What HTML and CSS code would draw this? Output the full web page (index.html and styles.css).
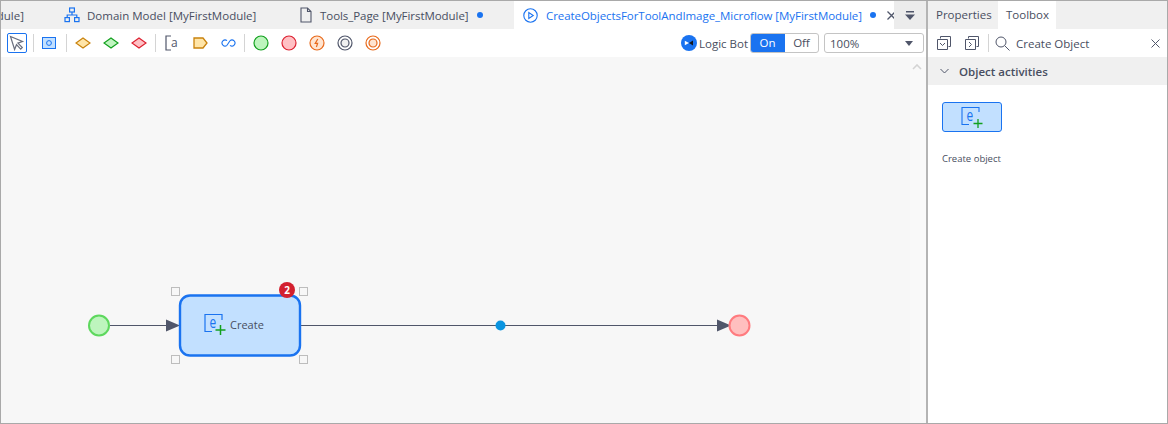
FILE: index.html
```html
<!DOCTYPE html>
<html lang="en">
<head>
    <meta charset="UTF-8">
    <title>Microflow editor</title>
    <link rel="stylesheet" href="styles.css">
</head>
<body>
<div class="app">
    <div class="editor">
        <div class="tabs">
            <div class="tab tab-cut"><span>Home_Web [MyFirstModule]</span></div>
            <div class="tab tab-domain">
                <svg class="tab-icon" width="16" height="16" viewBox="0 0 16 16" fill="none" stroke="#1a73f0" stroke-width="1.2">
                    <rect x="5.6" y="1" width="4.8" height="4"/>
                    <rect x="1" y="10.6" width="4.4" height="4"/>
                    <rect x="10.6" y="10.6" width="4.4" height="4"/>
                    <path d="M8 5v3M3.2 10.6V8h9.6v2.6"/>
                </svg>
                <span>Domain Model [MyFirstModule]</span>
            </div>
            <div class="tab tab-page">
                <svg class="tab-icon" width="12" height="16" viewBox="0 0 12 16" fill="none" stroke="#50566a" stroke-width="1.1">
                    <path d="M1 1h6.500L11 4.500V15H1zM7.500 1v3.500H11"/>
                </svg>
                <span>Tools_Page [MyFirstModule]</span>
                <i class="dot"></i>
            </div>
            <div class="tab tab-active">
                <svg class="tab-icon" width="15" height="15" viewBox="0 0 15 15" fill="none" stroke="#1a73f0" stroke-width="1.1">
                    <circle cx="7.5" cy="7.5" r="6.7"/>
                    <path d="M5.800 4.600v5.800l4.400-2.900z"/>
                </svg>
                <span>CreateObjectsForToolAndImage_Microflow [MyFirstModule]</span>
                <i class="dot"></i>
                <svg class="tab-close" width="9" height="9" viewBox="0 0 9 9" stroke="#50566a" stroke-width="1.3"><path d="M.5.500l8 8M8.500.5l-8 8"/></svg>
            </div>
            <div class="tab-menu">
                <svg width="10" height="9" viewBox="0 0 10 9" fill="#50566a"><rect x="1" y="0" width="8" height="1.5"/><path d="M0 3.500h10L5 9z"/></svg>
            </div>
        </div>

        <div class="toolbar">
            <div class="tool-select">
                <svg width="16" height="16" viewBox="0 0 16 16" fill="#fff" stroke="#6a6f7e" stroke-width="1.2"><path d="M1.500 1.500l12 5-4.600 1.600 4.400 4.400-1.600 1.600-4.200-4.400-1.900 4.800z"/></svg>
            </div>
            <i class="sep sep-first"></i>
            <div class="tool">
                <svg width="14" height="12" viewBox="0 0 14 12"><rect x=".5" y=".5" width="13" height="11" fill="#c2e0ff" stroke="#1a73f0"/><circle cx="7" cy="6" r="2.400" fill="none" stroke="#1a73f0"/></svg>
            </div>
            <i class="sep sep-second"></i>
            <div class="tool"><svg width="16" height="12" viewBox="0 0 16 12"><path d="M8 1l7 5-7 5-7-5z" fill="#ffe5a8" stroke="#c9820c" stroke-width="1.2"/></svg></div>
            <div class="tool"><svg width="16" height="12" viewBox="0 0 16 12"><path d="M8 1l7 5-7 5-7-5z" fill="#c0f5c0" stroke="#12a01e" stroke-width="1.2"/></svg></div>
            <div class="tool"><svg width="16" height="12" viewBox="0 0 16 12"><path d="M8 1l7 5-7 5-7-5z" fill="#ffc0c4" stroke="#dc2030" stroke-width="1.2"/></svg></div>
            <i class="sep"></i>
            <div class="tool">
                <svg width="14" height="16" viewBox="0 0 14 16" fill="none" stroke="#50566a" stroke-width="1.2">
                    <path d="M6 1H1v14h5"/>
                    <text x="6" y="12" class="icon-letter" fill="#50566a" stroke="none">a</text>
                </svg>
            </div>
            <div class="tool"><svg width="15" height="12" viewBox="0 0 15 12"><path d="M1 1h9l4 5-4 5H1z" fill="#ffe5a8" stroke="#c9820c" stroke-width="1.3"/></svg></div>
            <div class="tool">
                <svg width="15" height="8" viewBox="0 0 15 8" fill="none" stroke="#1a73f0" stroke-width="1.1"><path d="M6 1.700A3 3 0 1 0 6 6.300M9 1.700A3 3 0 1 1 9 6.300M6 6.300L9 1.700"/></svg>
            </div>
            <i class="sep"></i>
            <div class="tool"><svg width="16" height="16" viewBox="0 0 16 16"><circle cx="8" cy="8" r="7" fill="#bdf5bd" stroke="#12a01e" stroke-width="1.2"/></svg></div>
            <div class="tool"><svg width="16" height="16" viewBox="0 0 16 16"><circle cx="8" cy="8" r="7" fill="#ffc0c4" stroke="#dc2030" stroke-width="1.2"/></svg></div>
            <div class="tool">
                <svg width="16" height="16" viewBox="0 0 16 16"><circle cx="8" cy="8" r="7" fill="#ffe4d0" stroke="#e8691a" stroke-width="1.2"/><path d="M8.800 4L6.200 8.400h2.400L7.400 12" fill="none" stroke="#e8691a" stroke-width="1.2"/></svg>
            </div>
            <div class="tool">
                <svg width="16" height="16" viewBox="0 0 16 16" fill="none" stroke="#50566a" stroke-width="1.2"><circle cx="8" cy="8" r="7"/><circle cx="8" cy="8" r="4" fill="#f0f0f0"/></svg>
            </div>
            <div class="tool">
                <svg width="16" height="16" viewBox="0 0 16 16" fill="none" stroke="#e8691a" stroke-width="1.2"><circle cx="8" cy="8" r="7"/><circle cx="8" cy="8" r="4" fill="#ffe4d0"/></svg>
            </div>

            <div class="bot">
                <svg width="16" height="16" viewBox="0 0 16 16"><circle cx="8" cy="8" r="8" fill="#1a73f0"/><path d="M3.800 5.800l4.200 2.200-4.200 2.200z" fill="#fff"/><path d="M12 5.600L8 8l4 2.400z" fill="#14161c"/></svg>
                <span>Logic Bot</span>
            </div>
            <div class="toggle">
                <span class="toggle-on">On</span>
                <span class="toggle-off">Off</span>
            </div>
            <div class="zoom-select">
                <span>100%</span>
                <svg width="8" height="5" viewBox="0 0 8 5" fill="#50566a"><path d="M0 0h8L4 5z"/></svg>
            </div>
        </div>

        <div class="canvas">
            <div class="diagram">
                <svg class="flow" width="910" height="366" viewBox="0 57 910 366">
                    <path d="M110 325.500H170M301 325.500H720" stroke="#50566a" stroke-width="1.2"/>
                    <path d="M166 319.500l14 6-14 6zM717 319.500l14 6-14 6z" fill="#50566a"/>
                    <circle cx="99" cy="325.500" r="10" fill="#bdf5bd" stroke="#5ed85e" stroke-width="2"/>
                    <circle cx="739.500" cy="325.500" r="10" fill="#ffbfbf" stroke="#ff7b7f" stroke-width="2"/>
                    <circle cx="500.500" cy="325.500" r="5" fill="#0a94e0"/>
                    <rect x="180" y="295.500" width="120" height="60" rx="10" fill="#c2e0ff" stroke="#1a73f0" stroke-width="2.400"/>
                    <g fill="#f7f7f7" stroke="#bdbdbd">
                        <rect x="171.500" y="287.500" width="8" height="8"/>
                        <rect x="299.500" y="287.500" width="8" height="8"/>
                        <rect x="171.500" y="355.500" width="8" height="8"/>
                        <rect x="299.500" y="355.500" width="8" height="8"/>
                    </g>
                    <path d="M222 320v-5.500h-17v17h7" fill="none" stroke="#1a73f0" stroke-width="1.2"/>
                    <text class="icon-e" transform="translate(209.500 328) scale(.7 1)">e</text>
                    <path d="M220.500 325v10M215.500 330h10" stroke="#12a01e" stroke-width="1.500"/>
                    <text x="230" y="329" class="node-label">Create</text>
                    <circle cx="287" cy="290" r="8" fill="#d3202f"/>
                    <text x="287" y="294" class="node-badge">2</text>
                </svg>
            </div>
            <div class="scrollbar">
                <svg width="10" height="6" viewBox="0 0 10 6" fill="none" stroke="#d4d4d4" stroke-width="1.600"><path d="M1 5l4-4 4 4"/></svg>
            </div>
        </div>
    </div>

    <div class="side">
        <div class="tabs side-tabs">
            <div class="side-tab">Properties</div>
            <div class="side-tab side-tab-active">Toolbox</div>
        </div>
        <div class="side-toolbar">
            <svg width="14" height="14" viewBox="0 0 14 14" fill="none" stroke="#50566a"><path d="M3.500 2.500V.5h10v10h-2M.5 3.500h10v10H.5zM3 7l2.500 2.500L8 7"/></svg>
            <svg class="side-btn-2" width="14" height="14" viewBox="0 0 14 14" fill="none" stroke="#50566a"><path d="M3.500 2.500V.5h10v10h-2M.5 3.500h10v10H.5zM4 6l2.500 2.500L4 11"/></svg>
            <i class="sep side-sep"></i>
            <svg width="15" height="15" viewBox="0 0 15 15" fill="none" stroke="#50566a"><circle cx="6" cy="6" r="5"/><path d="M9.700 9.700L14.500 14.500"/></svg>
            <span class="search-text">Create Object</span>
            <svg class="search-clear" width="9" height="9" viewBox="0 0 9 9" stroke="#50566a"><path d="M.5.500l8 8M8.500.5l-8 8"/></svg>
        </div>
        <div class="section">
            <svg width="9" height="6" viewBox="0 0 9 6" fill="none" stroke="#50566a"><path d="M.5 1l4 4 4-4"/></svg>
            <span>Object activities</span>
        </div>
        <div class="toolbox-item">
            <div class="tile">
                <svg width="22" height="22" viewBox="0 0 22 22" fill="none">
                    <path d="M18 6V1.500H1v17h7" stroke="#1a73f0" stroke-width="1.100"/>
                    <text class="icon-e" transform="translate(5.500 15) scale(.7 1)">e</text>
                    <path d="M17 13v9M12.500 17.500h9" stroke="#12a01e" stroke-width="1.300"/>
                </svg>
            </div>
            <div class="tile-label">Create object</div>
        </div>
    </div>
</div>
</body>
</html>
```

FILE: styles.css
```css
* {
    box-sizing: border-box;
}
body {
    margin: 0;
    font-family: "Open Sans", "Noto Sans", sans-serif;
    font-size: 11.5px;
    color: #484e60;
    background-color: #fff;
}
.app {
    display: flex;
    width: 1168px;
    height: 424px;
    border: 1px solid #a9a9a9;
    overflow: hidden;
}
.editor {
    width: 927px;
    display: flex;
    flex-direction: column;
    border-right: 2px solid #b4b4b4;
    flex-shrink: 0;
}
.side {
    flex: 1;
    display: flex;
    flex-direction: column;
    min-width: 0;
}

/* tabs */
.tabs {
    display: flex;
    height: 28px;
    background-color: #f0f0f0;
    flex-shrink: 0;
}
.tab {
    display: flex;
    align-items: center;
    white-space: nowrap;
    overflow: hidden;
    flex-shrink: 0;
}
.tab-icon {
    flex-shrink: 0;
}
.tab-cut {
    width: 49px;
    justify-content: flex-end;
    padding-right: 26px;
}
.tab-cut span {
    flex-shrink: 0;
}
.tab-domain {
    width: 235px;
    padding-left: 14px;
}
.tab-domain .tab-icon {
    margin-right: 7px;
}
.tab-page {
    width: 229px;
    padding-left: 15px;
    letter-spacing: -0.06px;
}
.tab-page .tab-icon {
    margin-right: 8px;
}
.tab-active {
    width: 380px;
    padding-left: 9px;
    background-color: #fff;
    color: #1a73f0;
    letter-spacing: -0.06px;
}
.tab-active .tab-icon {
    margin-right: 8px;
}
.dot {
    width: 6px;
    height: 6px;
    border-radius: 50%;
    background-color: #1a73f0;
    margin-left: 8px;
    flex-shrink: 0;
}
.tab-close {
    margin-left: 11px;
    flex-shrink: 0;
}
.tab-menu {
    flex: 1;
    background-color: #ececec;
    display: flex;
    align-items: center;
    justify-content: center;
}

/* toolbar */
.toolbar {
    display: flex;
    align-items: center;
    height: 28px;
    padding-left: 6px;
    flex-shrink: 0;
}
.tool-select {
    width: 20px;
    height: 20px;
    border: 1px solid #1a73f0;
    border-radius: 2px;
    display: flex;
    align-items: center;
    justify-content: center;
}
.tool {
    width: 28px;
    height: 20px;
    display: flex;
    align-items: center;
    justify-content: center;
}
.sep {
    width: 1px;
    height: 18px;
    background-color: #d4d4d4;
    margin: 0 2px;
    flex-shrink: 0;
}
.sep-first {
    margin: 0 1px 0 6px;
}
.sep-second {
    margin: 0 2px 0 3px;
}
.icon-letter {
    font-size: 12px;
    font-family: "Open Sans", sans-serif;
}
.bot {
    display: flex;
    align-items: center;
    gap: 2px;
    margin-left: auto;
    margin-right: 2px;
}
.toggle {
    display: flex;
    height: 20px;
    width: 69px;
    border-radius: 3px;
    overflow: hidden;
    border: 1px solid #c4c4c4;
}
.toggle-on {
    width: 35px;
    margin: -1px 0 -1px -1px;
    background-color: #1a73f0;
    color: #fff;
    text-align: center;
    line-height: 20px;
}
.toggle-off {
    flex: 1;
    text-align: center;
    line-height: 18px;
}
.zoom-select {
    width: 100px;
    height: 20px;
    margin: 0 2px 0 5px;
    border: 1px solid #c4c4c4;
    border-radius: 3px;
    display: flex;
    align-items: center;
    justify-content: space-between;
    padding: 0 10px 0 5px;
}

/* canvas */
.canvas {
    flex: 1;
    display: flex;
    background-color: #f7f7f7;
    min-height: 0;
}
.diagram {
    flex: 1;
    position: relative;
    overflow: hidden;
}
.flow {
    position: absolute;
    left: -1px;
    top: 0;
}
.icon-e {
    font-family: "Open Sans", sans-serif;
    font-size: 17px;
    fill: #1a73f0;
}
.node-label {
    font-family: "Open Sans", sans-serif;
    font-size: 11px;
    fill: #484e60;
}
.node-badge {
    font-family: "Open Sans", sans-serif;
    font-size: 10px;
    font-weight: 700;
    fill: #fff;
    text-anchor: middle;
}
.scrollbar {
    width: 16px;
    background-color: #f9f9f9;
    display: flex;
    justify-content: center;
    padding: 7px 2px 0 0;
}

/* toolbox side */
.side-tab {
    width: 70px;
    padding-left: 8px;
    line-height: 28px;
}
.side-tab-active {
    width: 58px;
    background-color: #fff;
}
.side-toolbar {
    display: flex;
    align-items: center;
    height: 28px;
    padding-left: 9px;
    flex-shrink: 0;
}
.side-btn-2 {
    margin-left: 14px;
}
.side-sep {
    margin: 0 6px 0 9px;
}
.search-text {
    margin-left: 6px;
}
.search-clear {
    margin-left: auto;
    margin-right: 7px;
}
.section {
    display: flex;
    align-items: center;
    height: 28px;
    background-color: #f0f0f0;
    padding-left: 12px;
    font-weight: 600;
    flex-shrink: 0;
}
.section span {
    margin-left: 10px;
}
.toolbox-item {
    padding: 17px 0 0 14px;
}
.tile {
    width: 60px;
    height: 30px;
    background-color: #c2e0ff;
    border: 1px solid #1a73f0;
    border-radius: 3px;
    display: flex;
    align-items: center;
    justify-content: center;
}
.tile-label {
    margin-top: 20px;
    font-size: 9.5px;
    line-height: 13px;
}
```
